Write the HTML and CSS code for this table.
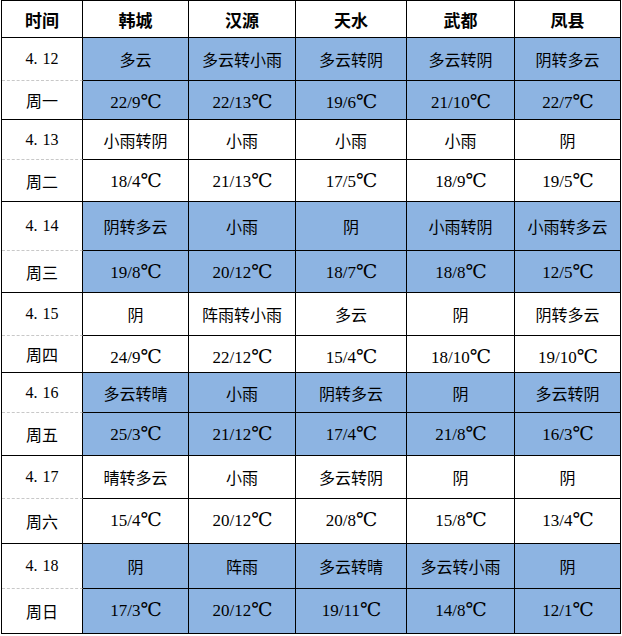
FILE: index.html
```html
<!DOCTYPE html>
<html lang="zh-CN">
<head>
<meta charset="utf-8">
<title>天气预报</title>
<link rel="stylesheet" href="styles.css">
</head>
<body>
<div class="grid">
  <div class="c h">时间</div><div class="c h">韩城</div><div class="c h">汉源</div><div class="c h">天水</div><div class="c h">武都</div><div class="c h">凤县</div>

  <div class="c d"><span class="n">4</span><span class="dot">.</span><span class="n">12</span></div><div class="c b">多云</div><div class="c b">多云转小雨</div><div class="c b">多云转阴</div><div class="c b">多云转阴</div><div class="c b">阴转多云</div>
  <div class="c w">周一</div><div class="c b t">22/9<span class="u">℃</span></div><div class="c b t">22/13<span class="u">℃</span></div><div class="c b t">19/6<span class="u">℃</span></div><div class="c b t">21/10<span class="u">℃</span></div><div class="c b t">22/7<span class="u">℃</span></div>

  <div class="c d"><span class="n">4</span><span class="dot">.</span><span class="n">13</span></div><div class="c">小雨转阴</div><div class="c">小雨</div><div class="c">小雨</div><div class="c">小雨</div><div class="c">阴</div>
  <div class="c w">周二</div><div class="c t">18/4<span class="u">℃</span></div><div class="c t">21/13<span class="u">℃</span></div><div class="c t">17/5<span class="u">℃</span></div><div class="c t">18/9<span class="u">℃</span></div><div class="c t">19/5<span class="u">℃</span></div>

  <div class="c d"><span class="n">4</span><span class="dot">.</span><span class="n">14</span></div><div class="c b">阴转多云</div><div class="c b">小雨</div><div class="c b">阴</div><div class="c b">小雨转阴</div><div class="c b">小雨转多云</div>
  <div class="c w">周三</div><div class="c b t">19/8<span class="u">℃</span></div><div class="c b t">20/12<span class="u">℃</span></div><div class="c b t">18/7<span class="u">℃</span></div><div class="c b t">18/8<span class="u">℃</span></div><div class="c b t">12/5<span class="u">℃</span></div>

  <div class="c d"><span class="n">4</span><span class="dot">.</span><span class="n">15</span></div><div class="c">阴</div><div class="c">阵雨转小雨</div><div class="c">多云</div><div class="c">阴</div><div class="c">阴转多云</div>
  <div class="c w">周四</div><div class="c t">24/9<span class="u">℃</span></div><div class="c t">22/12<span class="u">℃</span></div><div class="c t">15/4<span class="u">℃</span></div><div class="c t">18/10<span class="u">℃</span></div><div class="c t">19/10<span class="u">℃</span></div>

  <div class="c d"><span class="n">4</span><span class="dot">.</span><span class="n">16</span></div><div class="c b">多云转晴</div><div class="c b">小雨</div><div class="c b">阴转多云</div><div class="c b">阴</div><div class="c b">多云转阴</div>
  <div class="c w">周五</div><div class="c b t">25/3<span class="u">℃</span></div><div class="c b t">21/12<span class="u">℃</span></div><div class="c b t">17/4<span class="u">℃</span></div><div class="c b t">21/8<span class="u">℃</span></div><div class="c b t">16/3<span class="u">℃</span></div>

  <div class="c d"><span class="n">4</span><span class="dot">.</span><span class="n">17</span></div><div class="c">晴转多云</div><div class="c">小雨</div><div class="c">多云转阴</div><div class="c">阴</div><div class="c">阴</div>
  <div class="c w">周六</div><div class="c t">15/4<span class="u">℃</span></div><div class="c t">20/12<span class="u">℃</span></div><div class="c t">20/8<span class="u">℃</span></div><div class="c t">15/8<span class="u">℃</span></div><div class="c t">13/4<span class="u">℃</span></div>

  <div class="c d"><span class="n">4</span><span class="dot">.</span><span class="n">18</span></div><div class="c b">阴</div><div class="c b">阵雨</div><div class="c b">多云转晴</div><div class="c b">多云转小雨</div><div class="c b">阴</div>
  <div class="c w">周日</div><div class="c b t">17/3<span class="u">℃</span></div><div class="c b t">20/12<span class="u">℃</span></div><div class="c b t">19/11<span class="u">℃</span></div><div class="c b t">14/8<span class="u">℃</span></div><div class="c b t">12/1<span class="u">℃</span></div>
</div>
</body>
</html>
```

FILE: styles.css
```css
html, body {
  margin: 0;
  padding: 0;
  background: #ffffff;
}

.grid {
  display: grid;
  margin-left: 1px;
  width: max-content;
  grid-template-columns: 81px 106px 107px 111px 108px 106px;
  grid-template-rows: 37px 43px 39px 40px 42px 49px 42px 43px 37px 40px 43px 43px 45px 45px 45px;
  border-left: 1px solid #000;
  border-top: 1px solid #000;
  font-family: "Noto Sans CJK SC", "Noto Sans", sans-serif;
  font-size: 16px;
  color: #000;
}

.c {
  box-sizing: border-box;
  border-right: 1px solid #000;
  border-bottom: 1px solid #000;
  display: flex;
  align-items: center;
  justify-content: center;
  white-space: nowrap;
  font-weight: 400;
}

.h {
  font-weight: 700;
  font-size: 17px;
}

.b {
  background: #8db4e2;
}

.t {
  font-family: "Liberation Serif", "DejaVu Serif", serif;
  font-size: 17px;
  align-items: baseline;
  padding-top: 9px;
}

.t .u {
  font-family: "DejaVu Serif", serif;
  font-size: 19px;
  letter-spacing: -1px;
}

.d {
  border-bottom: 1px dashed #c8c8c8;
  font-family: "Liberation Serif", serif;
  font-size: 16px;
}

.d .dot {
  display: inline-block;
  width: 9px;
}

.w {
  font-size: 16px;
}
```
